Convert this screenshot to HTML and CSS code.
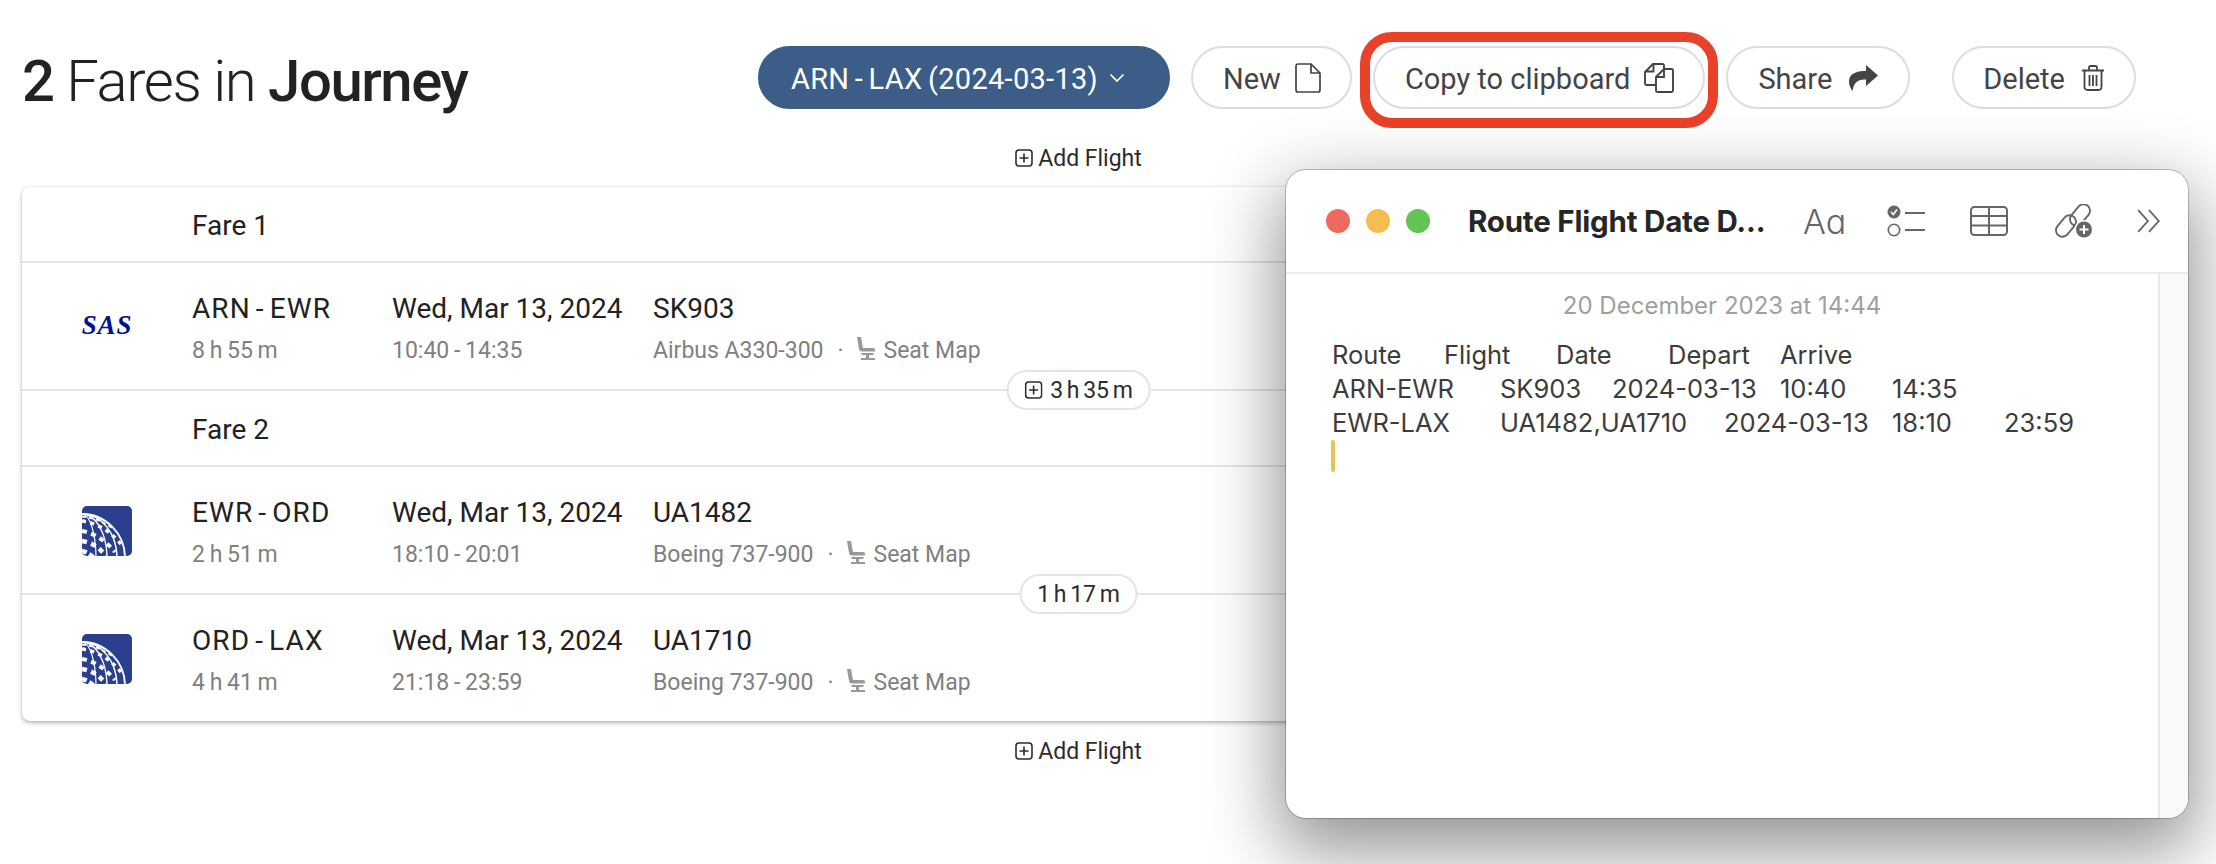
FILE: index.html

```html
<!DOCTYPE html>
<html lang="en">
<head>
  <meta charset="UTF-8" />
  <title>Fares in Journey</title>
  <link rel="stylesheet" href="styles.css">
</head>
<body>
  <svg class="defs" width="0" height="0">
    <defs>
      <symbol id="plus-box" viewBox="0 0 18 18">
        <rect x="1" y="1" width="16" height="16" rx="3" fill="none" stroke="currentColor" stroke-width="1.6"/>
        <path d="M9 4.5v9M4.5 9h9" fill="none" stroke="currentColor" stroke-width="1.6"/>
      </symbol>
      <symbol id="seat" viewBox="0 0 20 23">
        <path d="M1 0h4l2 11h10a2 2 0 0 1 2 2v1.500H6a3 3 0 0 1-3-2.500z" fill="currentColor"/>
        <path d="M5 16h13l-1 2h-4v3h6v2H5v-2h5v-3H6z" fill="currentColor"/>
      </symbol>
      <symbol id="united" viewBox="0 0 50 50">
        <clipPath id="united-clip"><rect width="50" height="50" rx="5"/></clipPath>
        <g clip-path="url(#united-clip)">
          <rect width="50" height="50" fill="#2b3f8f"/>
          <g fill="none" stroke="#fff">
            <ellipse cx="0" cy="52" rx="43" ry="44" stroke-width="1.800"/>
            <ellipse cx="0" cy="52" rx="35" ry="44" stroke-width="1.500"/>
            <ellipse cx="0" cy="52" rx="25" ry="44" stroke-width="1.300"/>
            <ellipse cx="0" cy="52" rx="14" ry="44" stroke-width="1.200"/>
            <path d="M0 15Q22 18 39 38" stroke-width="3.500" stroke-dasharray="4 4.500"/>
            <path d="M0 25Q18 28 33 46" stroke-width="4" stroke-dasharray="5 4.500"/>
            <path d="M0 35Q14 37 24 50" stroke-width="4.500" stroke-dasharray="5 4.500"/>
            <path d="M0 45Q6 46 12 52" stroke-width="4.500" stroke-dasharray="5 3"/>
            <path d="M0 10.500Q16 12 30 22" stroke-width="1.800" stroke-dasharray="4 3"/>
          </g>
        </g>
      </symbol>
    </defs>
  </svg>

  <header class="top">
    <h1 class="title"><b>2</b> Fares in <b>Journey</b></h1>
    <div class="actions">
      <button class="btn btn-primary">ARN - LAX (2024-03-13)
        <svg class="chev" viewBox="0 0 16 10"><path d="M1.500 1.500 8 8l6.500-6.500" fill="none" stroke="currentColor" stroke-width="1.700"/></svg>
      </button>
      <button class="btn btn-new">New
        <svg class="ico" viewBox="0 0 26 30"><path d="M1 3a2 2 0 0 1 2-2h13l9 9v17a2 2 0 0 1-2 2H3a2 2 0 0 1-2-2zM16 1v9h9" fill="none" stroke="currentColor" stroke-width="1.700"/></svg>
      </button>
      <button class="btn btn-marked">Copy to clipboard
        <svg class="ico ico-copy" viewBox="0 0 30 30"><path d="M20 6V2.500A1.500 1.500 0 0 0 18.500 1H9L1 9v11.500A1.500 1.500 0 0 0 2.500 22H12M9.500 1.500v7h-8M20 6h7.500A1.500 1.500 0 0 1 29 7.500v20a1.500 1.500 0 0 1-1.500 1.500h-14a1.500 1.500 0 0 1-1.500-1.500V14zM20 6v8h-8" fill="none" stroke="currentColor" stroke-width="1.900"/></svg>
      </button>
      <button class="btn">Share
        <svg class="ico ico-share" viewBox="0 0 30 26"><path d="M18 0l12 10.500L18 21v-6.500C10 14 6 17 4.500 26 1 21 0 16 2 12 5 7 11 6 18 6z" fill="currentColor"/></svg>
      </button>
      <button class="btn btn-delete">Delete
        <svg class="ico ico-trash" viewBox="0 0 24 26"><path d="M1 5.500h22M8 5.500V2.500a1.500 1.500 0 0 1 1.500-1.500h5A1.500 1.500 0 0 1 16 2.500v3M3.500 5.500V22a3 3 0 0 0 3 3h11a3 3 0 0 0 3-3V5.500M8.500 10v11M12 10v11M15.500 10v11" fill="none" stroke="currentColor" stroke-width="1.800"/></svg>
      </button>
    </div>
  </header>

  <main class="journey">
    <div class="add-flight"><svg class="plus"><use href="#plus-box"/></svg>Add Flight</div>

    <section class="card">
      <div class="fare-row">Fare 1</div>

      <div class="flight-row">
        <div class="logo"><span class="sas">SAS</span></div>
        <div class="col-route"><div class="main route">ARN - EWR</div><div class="sub">8 h 55 m</div></div>
        <div class="col-date"><div class="main">Wed, Mar 13, 2024</div><div class="sub">10:40 - 14:35</div></div>
        <div class="col-info"><div class="main">SK903</div><div class="sub">Airbus A330-300<span class="dot">·</span><svg class="seat"><use href="#seat"/></svg>Seat Map</div></div>
        <div class="layover"><svg class="plus"><use href="#plus-box"/></svg>3 h 35 m</div>
      </div>

      <div class="fare-row">Fare 2</div>

      <div class="flight-row">
        <div class="logo"><svg class="united"><use href="#united"/></svg></div>
        <div class="col-route"><div class="main route">EWR - ORD</div><div class="sub">2 h 51 m</div></div>
        <div class="col-date"><div class="main">Wed, Mar 13, 2024</div><div class="sub">18:10 - 20:01</div></div>
        <div class="col-info"><div class="main">UA1482</div><div class="sub">Boeing 737-900<span class="dot">·</span><svg class="seat"><use href="#seat"/></svg>Seat Map</div></div>
        <div class="layover">1 h 17 m</div>
      </div>

      <div class="flight-row">
        <div class="logo"><svg class="united"><use href="#united"/></svg></div>
        <div class="col-route"><div class="main route">ORD - LAX</div><div class="sub">4 h 41 m</div></div>
        <div class="col-date"><div class="main">Wed, Mar 13, 2024</div><div class="sub">21:18 - 23:59</div></div>
        <div class="col-info"><div class="main">UA1710</div><div class="sub">Boeing 737-900<span class="dot">·</span><svg class="seat"><use href="#seat"/></svg>Seat Map</div></div>
      </div>
    </section>

    <div class="add-flight add-flight-bottom"><svg class="plus"><use href="#plus-box"/></svg>Add Flight</div>
  </main>

  <div class="notes">
    <div class="notes-bar">
      <div class="lights"><i class="red"></i><i class="amber"></i><i class="green"></i></div>
      <div class="notes-title">Route Flight Date D...</div>
      <div class="notes-tools">
        <span class="aa">Aa</span>
        <svg class="tool-check" viewBox="0 0 38 32"><circle cx="7" cy="7" r="6.500" fill="#666"/><path d="M4 7l2.300 2.500L10 4.500" fill="none" stroke="#fff" stroke-width="1.500"/><circle cx="7" cy="25" r="5.700" fill="none" stroke="#666" stroke-width="1.600"/><path d="M18 8h20M18 25h20" stroke="#666" stroke-width="2"/></svg>
        <svg class="tool-table" viewBox="0 0 38 30"><rect x="1" y="1" width="36" height="28" rx="3.500" fill="none" stroke="#666" stroke-width="2"/><path d="M1 10h36M1 19.500h36M19 1v28" stroke="#666" stroke-width="2"/></svg>
        <svg class="tool-link" viewBox="0 0 38 34"><g fill="none" stroke="#666" stroke-width="1.900"><rect x="18.500" y="-1" width="13" height="24" rx="6.500" transform="rotate(40 25 11)"/><rect x="4.500" y="10" width="13" height="24" rx="6.500" transform="rotate(40 11 22)"/></g><circle cx="29" cy="25.500" r="9.500" fill="#fff"/><circle cx="29" cy="25.500" r="8" fill="#666"/><path d="M29 21v9M24.500 25.500h9" stroke="#fff" stroke-width="2"/></svg>
        <svg class="tool-more" viewBox="0 0 24 22"><path d="M2 1l9 10-9 10M12 1l9 10-9 10" fill="none" stroke="#666" stroke-width="1.700"/></svg>
      </div>
    </div>
    <div class="notes-body">
      <div class="note-page">
        <div class="note-date">20 December 2023 at 14:44</div>
        <div class="note-text">Route	Flight	Date	Depart	Arrive
ARN-EWR	SK903	2024-03-13	10:40	14:35
EWR-LAX	UA1482,UA1710	2024-03-13	18:10	23:59</div>
        <div class="caret"></div>
      </div>
      <div class="note-scroll"></div>
    </div>
  </div>
</body>
</html>
```

FILE: styles.css

```css
* {
  box-sizing: border-box;
}
body {
  margin: 0;
  height: 864px;
  overflow: hidden;
  background: #fff;
  color: #222;
  font-family: Roboto, Arial, sans-serif;
  position: relative;
}
.defs {
  position: absolute;
}
.top {
  display: flex;
  align-items: flex-start;
  justify-content: space-between;
  padding: 46px 80px 0 22px;
  height: 109px;
}
.title {
  margin: 0;
  font-size: 58px;
  line-height: 70px;
  font-weight: 300;
  letter-spacing: -1.4px;
  white-space: pre;
}
.title b {
  font-weight: 500;
}
.actions {
  display: flex;
  gap: 21px;
}
.btn {
  position: relative;
  display: flex;
  align-items: center;
  gap: 16px;
  height: 63px;
  padding: 2px 30px 0;
  border: 2px solid #ddd;
  border-radius: 32px;
  background: #fff;
  color: #444;
  font: inherit;
  font-size: 29px;
  white-space: nowrap;
}
.btn .ico,
.btn .chev {
  margin-top: -2px;
}
.btn-primary {
  background: #3b5d87;
  border-color: #3b5d87;
  color: #fff;
  gap: 11px;
  padding: 2px 43px 0 31px;
  letter-spacing: 0.3px;
  word-spacing: -2px;
}
.btn-new {
  gap: 14px;
  padding-right: 29px;
}
.btn-marked {
  gap: 14px;
  padding: 2px 29px 0 30px;
}
.btn-delete {
  margin-left: 21px;
  padding: 2px 29px 0;
}
.btn-marked::after {
  content: "";
  position: absolute;
  left: -15px;
  right: -15px;
  top: -16px;
  bottom: -21px;
  border: 10px solid #e9412a;
  border-radius: 32px;
}
.chev {
  width: 16px;
  height: 10px;
}
.ico {
  width: 26px;
  height: 30px;
}
.ico-copy {
  width: 30px;
}
.ico-share {
  width: 30px;
  height: 26px;
}
.ico-trash {
  width: 24px;
  height: 26px;
}
.journey {
  padding: 0 81px 0 22px;
}
.add-flight {
  display: flex;
  align-items: center;
  justify-content: center;
  gap: 5px;
  height: 78px;
  padding-top: 20px;
  font-size: 23px;
  color: #2c2c2c;
}
.add-flight-bottom {
  height: 60px;
  padding-top: 0;
}
.plus {
  width: 18px;
  height: 18px;
}
.card {
  height: 534px;
  border-radius: 8px;
  background: #fff;
  box-shadow: 0 2px 4px rgba(0,0,0,0.28), 0 0 2px rgba(0,0,0,0.12);
}
.fare-row {
  height: 76px;
  padding: 22px 0 0 170px;
  border-bottom: 2px solid #e4e4e4;
  font-size: 28px;
  line-height: 34px;
}
.flight-row {
  position: relative;
  display: grid;
  grid-template-columns: 170px 200px 261px 1fr;
  height: 128px;
  padding-top: 29px;
  border-bottom: 2px solid #e4e4e4;
}
.flight-row + .flight-row {
  height: 126px;
  border-bottom: 0;
}
.main {
  font-size: 28px;
  line-height: 34px;
  white-space: nowrap;
}
.route {
  letter-spacing: 1.100px;
  word-spacing: -3px;
}
.sub {
  display: flex;
  align-items: center;
  margin-top: 12px;
  font-size: 23px;
  line-height: 26px;
  color: #808080;
  white-space: nowrap;
}
.col-route .sub,
.col-date .sub {
  word-spacing: -1px;
}
.logo {
  display: flex;
  justify-content: center;
  width: 170px;
  padding-top: 8px;
}
.sas {
  font-family: "Liberation Serif", serif;
  font-size: 27px;
  font-weight: bold;
  font-style: italic;
  line-height: 50px;
  letter-spacing: 0.8px;
  color: #00128c;
}
.united {
  width: 50px;
  height: 50px;
  margin-top: 2px;
}
.dot {
  margin: 0 14px;
}
.seat {
  width: 20px;
  height: 23px;
  margin-right: 8px;
  margin-left: -2px;
  margin-top: -6px;
  color: #999;
}
.layover {
  position: absolute;
  left: 50%;
  bottom: -21px;
  transform: translateX(-50%);
  display: flex;
  align-items: center;
  gap: 8px;
  height: 40px;
  padding: 0 16px;
  border: 2px solid #e4e4e4;
  border-radius: 20px;
  background: #fff;
  font-size: 23px;
  word-spacing: -2px;
  color: #2c2c2c;
  white-space: nowrap;
}
/* notes window sits on top of the page */
.notes {
  position: absolute;
  left: 1286px;
  top: 170px;
  width: 902px;
  height: 648px;
  display: flex;
  flex-direction: column;
  background: #fff;
  border-radius: 20px;
  box-shadow: 0 0 0 1px rgba(0,0,0,0.22), 0 26px 70px 8px rgba(0,0,0,0.42);
  font-family: Inter, Arial, sans-serif;
}
.notes-bar {
  display: flex;
  align-items: center;
  height: 104px;
  border-bottom: 2px solid #ececec;
  padding: 0 26px 0 40px;
}
.lights {
  display: flex;
  gap: 16px;
}
.lights i {
  display: block;
  width: 24px;
  height: 24px;
  border-radius: 50%;
}
.red { background: #ee6a5f; }
.amber { background: #f5bd4f; }
.green { background: #61c454; }
.notes-title {
  margin-left: 38px;
  font-size: 29.500px;
  font-weight: 700;
  letter-spacing: -0.2px;
  white-space: nowrap;
  color: #262626;
}
.notes-tools {
  display: flex;
  align-items: center;
  margin-left: auto;
}
.aa {
  width: 84px;
  font-size: 34px;
  font-weight: 300;
  font-feature-settings: "cv11";
  color: #666;
}
.tool-check {
  width: 38px;
  height: 32px;
  margin-right: 45px;
}
.tool-table {
  width: 38px;
  height: 30px;
  margin-right: 47px;
}
.tool-link {
  width: 38px;
  height: 34px;
  margin-right: 43px;
}
.tool-more {
  width: 26px;
  height: 24px;
}
.notes-body {
  flex: 1;
  display: flex;
  min-height: 0;
}
.note-page {
  flex: 1;
  padding: 18px 0 0 46px;
}
.note-date {
  margin-left: -46px;
  text-align: center;
  font-size: 24px;
  line-height: 28px;
  color: #a0a0a0;
}
.note-text {
  margin-top: 18px;
  font-size: 25.500px;
  line-height: 34px;
  color: #3c3c3c;
  white-space: pre;
  tab-size: 56px;
}
.caret {
  width: 4px;
  height: 32px;
  margin-left: -1px;
  border-radius: 2px;
  background: #edc154;
}
.note-scroll {
  width: 30px;
  background: #f9f9f9;
  border-left: 2px solid #e8e8e8;
  border-bottom-right-radius: 20px;
}
```
